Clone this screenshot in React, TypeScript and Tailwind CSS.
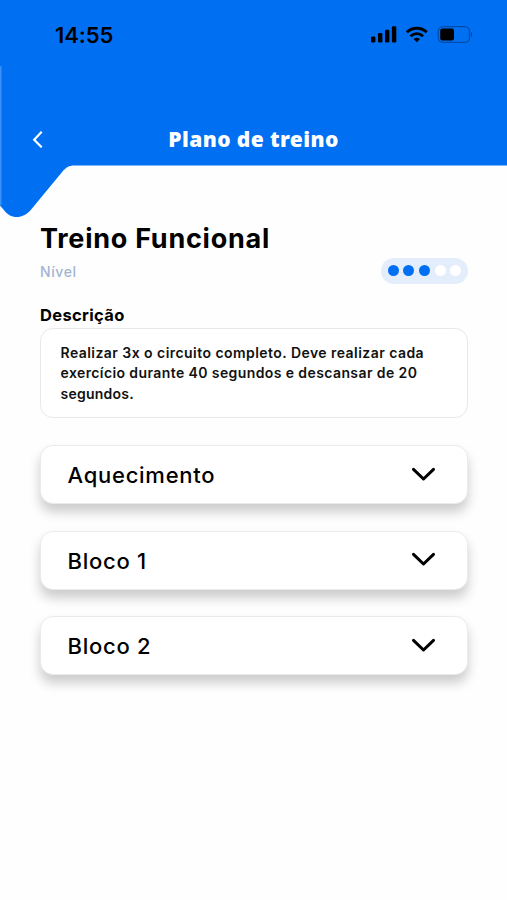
const BLOCKS = ['Aquecimento', 'Bloco 1', 'Bloco 2']

const LEVEL = 3
const MAX_LEVEL = 5

function StatusIcons() {
  return (
    <svg width="102" height="20" viewBox="370 25 102 20" fill="none">
      {/* signal */}
      <g fill="#000">
        <rect x="371" y="36.4" width="4.400" height="6.2" rx="1.3" />
        <rect x="378" y="33" width="4.400" height="9.6" rx="1.3" />
        <rect x="385" y="29.8" width="4.400" height="12.8" rx="1.3" />
        <rect x="391.900" y="26.3" width="4.400" height="16.3" rx="1.3" />
      </g>
      {/* wifi */}
      <g stroke="#000" strokeWidth="2.9">
        <path d="M406.9 32.2a14.2 14.2 0 0 1 19.8 0" />
        <path d="M410.6 36.2a8.8 8.8 0 0 1 12.4 0" />
      </g>
      <path d="M416.8 42.3l-3.2-3.2a4.8 4.8 0 0 1 6.4 0z" fill="#000" />
      {/* battery */}
      <rect x="438.3" y="26.6" width="31.2" height="15.8" rx="4.6" stroke="#000" strokeOpacity="0.3" strokeWidth="1.3" />
      <rect x="440.2" y="28.6" width="13.8" height="11.8" rx="2.2" fill="#000" />
      <path d="M471 32v5c1-.5 1.6-1.4 1.6-2.5S472 32.500 471 32z" fill="#000" fillOpacity="0.35" />
    </svg>
  )
}

function Header() {
  return (
    <header className="relative h-[166px] shrink-0 text-white">
      <svg className="absolute left-0 top-0" width="507" height="220" viewBox="0 0 507 220">
        <path
          d="M0 0H507V165.500H74C69 165.500 66 167.500 62.500 171.500L32 208.500C23.500 219.500 10.500 220 3.500 209.500L0 205.500Z"
          fill="#006ff2"
        />
        <path d="M0.750 66V205" stroke="#3b91f5" strokeWidth="1.5" />
      </svg>
      <div className="relative flex h-[70px] items-center justify-between pl-[55px] pr-[35px]">
        <span className="text-[22px] font-semibold leading-none tracking-[-0.1px] text-black">14:55</span>
        <StatusIcons />
      </div>
      <div className="relative mt-[49px] flex h-10 items-center">
        <button className="ml-[30px] flex h-10 w-4 items-center justify-center" aria-label="Voltar">
          <svg width="12" height="18" viewBox="0 0 12 18" fill="none" stroke="currentColor" strokeWidth="2.2">
            <path d="M9.700 1.800L2.200 9.800L9.700 17.300" />
          </svg>
        </button>
        <h1 className="mr-[46px] flex-1 text-center font-['Noto_Sans',sans-serif] text-[21px] font-black leading-none tracking-[0.4px]">
          Plano de treino
        </h1>
      </div>
    </header>
  )
}

function LevelDots() {
  return (
    <div className="flex h-[26px] w-[87px] items-center justify-center gap-[4.700px] rounded-full bg-[#e4edfc]">
      {Array.from({ length: MAX_LEVEL }, (_, i) => (
        <span key={i} className={`size-[11px] rounded-full ${i < LEVEL ? 'bg-[#006ff2]' : 'bg-white'}`} />
      ))}
    </div>
  )
}

export default function App() {
  return (
    <div className="flex h-screen w-full flex-col bg-[#fefefe] font-[Inter,sans-serif] text-black">
      <Header />
      <main className="flex flex-col pl-10 pr-[39px] pt-[56px]">
        <h2 className="whitespace-nowrap pt-px text-[27px] font-bold leading-8 tracking-[0.740px]">Treino Funcional</h2>
        <div className="mt-[2.500px] flex h-[26px] items-center justify-between">
          <span className="pt-px text-[14px] font-medium tracking-[0.6px] text-[#a3b5cf]">Nível</span>
          <LevelDots />
        </div>
        <h3 className="mt-[21.500px] text-[16.500px] font-bold leading-5 tracking-[0.350px]">Descrição</h3>
        <p className="mt-[3px] flex h-[90px] flex-col whitespace-nowrap rounded-[13px] border border-[#e8e8e8] bg-white pl-[19.500px] pt-[13.500px] text-[14px] font-semibold leading-[20.800px] text-[#111]">
          <span className="tracking-[0.450px]">Realizar 3x o circuito completo. Deve realizar cada</span>
          <span className="tracking-[0.400px]">exercício durante 40 segundos e descansar de 20</span>
          <span className="tracking-[0.250px]">segundos.</span>
        </p>
        <div className="mt-[27px] flex flex-col gap-[26.500px]">
          {BLOCKS.map((name) => (
            <button
              key={name}
              className="flex h-[59px] items-center justify-between rounded-[13px] border border-[#ebebeb] bg-white pl-[26.500px] pr-[31px] shadow-[0_8px_12px_rgba(0,0,0,0.2)]"
            >
              <span className="pt-[2px] text-[22px] font-medium tracking-[0.740px]">{name}</span>
              <svg width="25" height="16" viewBox="0 0 25 16" fill="none" stroke="#000" strokeWidth="3" strokeLinecap="round" strokeLinejoin="round">
                <path d="M2.500 2.300L12.500 12L22.500 2.300" />
              </svg>
            </button>
          ))}
        </div>
      </main>
    </div>
  )
}
